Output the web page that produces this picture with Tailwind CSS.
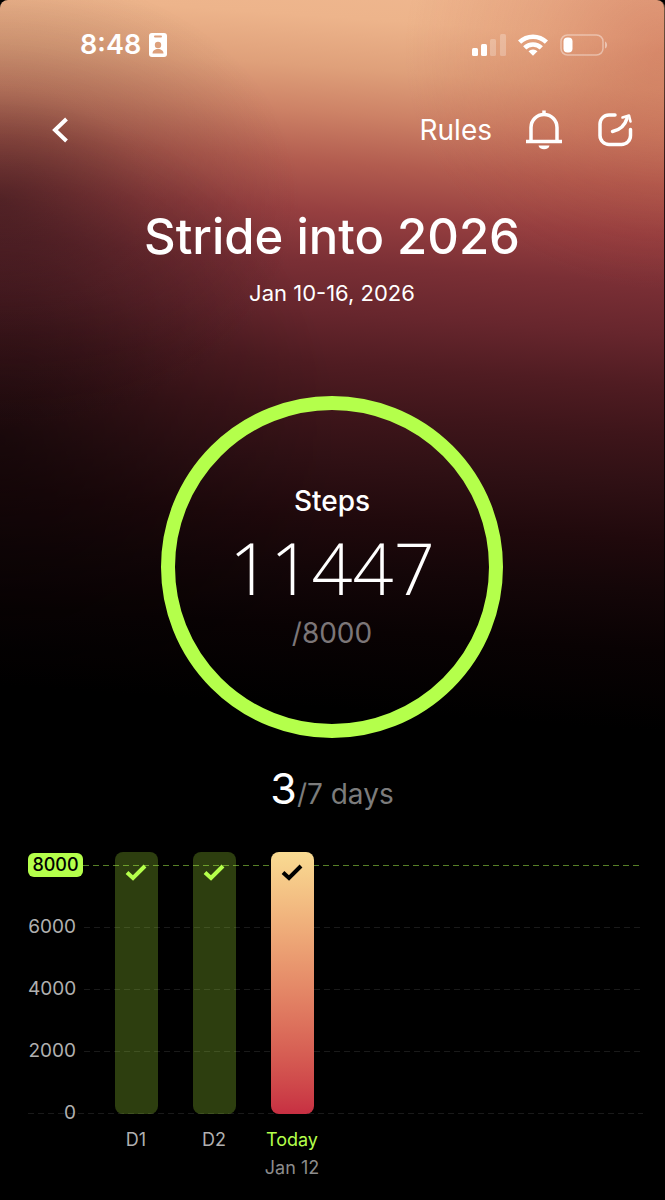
<!DOCTYPE html>
<html lang="en">
<head>
  <meta charset="UTF-8" />
  <meta name="viewport" content="width=device-width, initial-scale=1.0"/>
  <title>Stride into 2026</title>

  <!-- Tailwind CDN -->
  <script src="https://cdn.jsdelivr.net/npm/@tailwindcss/browser@4"></script>

  <style>
    /* Sunset glow behind the header and the ring */
    .glow {
      background:
        radial-gradient(ellipse 260px 240px at 100% 50px, rgba(176, 58, 46, .34), rgba(176, 58, 46, .14) 50%, transparent),
        radial-gradient(ellipse 300px 230px at 0 200px, rgba(22, 10, 16, .44), rgba(22, 10, 16, .16) 50%, transparent),
        radial-gradient(ellipse 340px 340px at 0 440px, rgba(0, 0, 0, .48), rgba(0, 0, 0, .17) 55%, transparent),
        linear-gradient(184deg, #efb78f 0, #edb48b 40px, #dfa07a 90px, #cd8266 135px, #b25c4f 185px, #963f40 235px, #7a2f35 285px, #67262d 335px, #501c22 385px, #3e151a 435px, #2f1014 485px, #20090c 540px, #140608 590px, #090203 650px, #000 730px);
    }
  </style>
</head>

<body class="min-h-screen bg-black font-[Inter,sans-serif] text-white">
  <div class="glow min-h-screen overflow-hidden rounded-t-lg border-r border-black/50">

    <!-- Status bar -->
    <div class="flex h-[90px] items-center justify-between pl-20 pr-14">
      <div class="flex items-center gap-2">
        <span class="text-[27px] font-semibold leading-8">8:48</span>
        <svg class="h-6 w-[18px]" viewBox="0 0 18 24" fill="none">
          <rect width="18" height="24" rx="3" fill="#fff"/>
          <rect x="5" y="2.5" width="8" height="2" rx="1" fill="#dda07c"/>
          <circle cx="9" cy="12" r="3.2" fill="#dda07c"/>
          <path d="M3.5 20.5c0-3 2.500-4.500 5.500-4.500s5.500 1.500 5.500 4.500z" fill="#dda07c"/>
        </svg>
      </div>
      <div class="flex items-center gap-3">
        <svg class="h-[22px] w-[34px]" viewBox="0 0 34 22" fill="#fff">
          <rect x="0" y="14" width="6" height="8" rx="1.500"/>
          <rect x="9" y="10" width="6" height="12" rx="1.500"/>
          <rect x="18" y="5" width="6" height="17" rx="1.500" opacity=".25"/>
          <rect x="28" y="0" width="6" height="22" rx="1.500" opacity=".25"/>
        </svg>
        <svg class="h-[22px] w-[30px]" viewBox="0 0 30 22" fill="none" stroke="#fff" stroke-width="4.500">
          <path d="M1.600 8.200a19 19 0 0 1 26.800 0"/>
          <path d="M6.700 13.800a11.800 11.800 0 0 1 16.600 0"/>
          <path d="M15 21.800l-4.500-4.500a6.400 6.400 0 0 1 9 0z" fill="#fff" stroke="none"/>
        </svg>
        <svg class="h-[22px] w-12" viewBox="0 0 48 22" fill="none">
          <rect x="1" y="1" width="42" height="20" rx="6.500" stroke="#fff" stroke-opacity=".4" stroke-width="1.500"/>
          <rect x="3.500" y="3.500" width="9" height="15" rx="4" fill="#fff"/>
          <path d="M45 7.500c2.800 1 2.800 6 0 7z" fill="#fff" fill-opacity=".45"/>
        </svg>
      </div>
    </div>

    <!-- Navigation -->
    <nav class="flex h-20 items-center justify-between pl-[50px] pr-[30px]">
      <button aria-label="Back" class="p-0">
        <svg class="h-7 w-5" viewBox="0 0 20 28" fill="none" stroke="#fff" stroke-width="4">
          <path d="M16.500 3L5 14l11.500 11"/>
        </svg>
      </button>
      <div class="flex items-center gap-[34px]">
        <a href="#" class="text-[28px] leading-8">Rules</a>
        <button aria-label="Notifications">
          <svg class="h-10 w-9" viewBox="0 0 36 40" fill="none" stroke="#fff" stroke-width="3.500">
            <path d="M18 0.500v4"/>
            <path d="M5 31V17.500a13 13 0 0 1 26 0V31"/>
            <path d="M0 31.500h36"/>
            <path d="M12.500 35.500h11c-.5 2.500-2.500 3.700-5.400 3.700s-5.100-1.200-5.600-3.700z" fill="#fff" stroke="none"/>
          </svg>
        </button>
        <button aria-label="Share">
          <svg class="h-9 w-[38px]" viewBox="0 0 38 36" fill="none" stroke="#fff" stroke-width="3.500" stroke-linecap="round">
            <path d="M19 3h-6a9 9 0 0 0-9 9v11.500a9 9 0 0 0 9 9h12.500a9 9 0 0 0 9-9v-6"/>
            <path d="M16.500 19.500c7.500-1.500 12.500-6.500 14.500-13"/>
            <path d="M26.500 5.500l6.500-2 1.500 6" stroke-linejoin="round" stroke-width="2.600"/>
          </svg>
        </button>
      </div>
    </nav>

    <main>
      <header class="pt-[37px] text-center">
        <h1 class="text-[49px] font-medium leading-[60px]">Stride into 2026</h1>
        <p class="mt-3 text-[22px] leading-7">Jan 10-16, 2026</p>
      </header>

      <!-- Step ring -->
      <section class="mx-auto mt-[89px] flex size-[342px] flex-col items-center rounded-full border-[14px] border-[#b4ff4b] pt-[73px]">
        <h2 class="text-[28px] font-medium leading-9">Steps</h2>
        <p class="mt-2 font-['Open_Sans',sans-serif] text-[72px] font-light leading-[80px]">11447</p>
        <p class="mt-2 text-[28px] leading-9 text-[#7c7678]">/8000</p>
      </section>

      <p class="mt-5 text-center text-[28px] leading-[60px] text-[#7c7c7c]"><span class="text-[43px] text-white">3</span>/7 days</p>

      <!-- Daily chart -->
      <section class="mt-[10px] grid pl-7 pr-[21px] text-[18px] leading-6 text-[#b0b0b0]">
        <div class="col-start-1 row-start-1 text-[19px]">
          <div class="flex h-[62px] items-center">
            <span class="w-[55px] rounded-md bg-[#b4ff4b] text-center text-[18px] font-medium text-black">8000</span>
            <span class="h-px flex-1 bg-[repeating-linear-gradient(90deg,#578027_0_6px,transparent_6px_10px)]"></span>
          </div>
          <div class="flex h-[62px] items-center gap-2">
            <span class="w-12 text-right">6000</span>
            <span class="h-px flex-1 bg-[repeating-linear-gradient(90deg,#1a1a1a_0_6px,transparent_6px_10px)]"></span>
          </div>
          <div class="flex h-[62px] items-center gap-2">
            <span class="w-12 text-right">4000</span>
            <span class="h-px flex-1 bg-[repeating-linear-gradient(90deg,#1a1a1a_0_6px,transparent_6px_10px)]"></span>
          </div>
          <div class="flex h-[62px] items-center gap-2">
            <span class="w-12 text-right">2000</span>
            <span class="h-px flex-1 bg-[repeating-linear-gradient(90deg,#1a1a1a_0_6px,transparent_6px_10px)]"></span>
          </div>
          <div class="flex h-[62px] items-center bg-[repeating-linear-gradient(90deg,#1a1a1a_0_6px,transparent_6px_10px)] bg-[length:100%_1px] bg-center bg-no-repeat">
            <span class="w-12 text-right">0</span>
          </div>
        </div>

        <!-- One column per challenge day, four still to come -->
        <div class="col-start-1 row-start-1 ml-[69px] grid grid-cols-7 pt-[18px] text-center">
          <div class="flex flex-col items-center">
            <div class="flex h-[262px] w-[43px] justify-center rounded-lg bg-[#b4f83c]/25 pt-3">
              <svg class="h-[18px] w-[22px]" viewBox="0 0 22 18" fill="none" stroke="#b4ff4b" stroke-width="4"><path d="M2 8.500l6 5.500L20 2"/></svg>
            </div>
            <span class="mt-[14px]">D1</span>
          </div>
          <div class="flex flex-col items-center">
            <div class="flex h-[262px] w-[43px] justify-center rounded-lg bg-[#b4f83c]/25 pt-3">
              <svg class="h-[18px] w-[22px]" viewBox="0 0 22 18" fill="none" stroke="#b4ff4b" stroke-width="4"><path d="M2 8.500l6 5.500L20 2"/></svg>
            </div>
            <span class="mt-[14px]">D2</span>
          </div>
          <div class="flex flex-col items-center">
            <div class="flex h-[262px] w-[43px] justify-center rounded-lg bg-linear-to-b from-[#f9db92] to-[#c72f42] pt-3">
              <svg class="h-[18px] w-[22px]" viewBox="0 0 22 18" fill="none" stroke="#000" stroke-width="4"><path d="M2 8.500l6 5.500L20 2"/></svg>
            </div>
            <span class="mt-[14px] text-[#b4ff4b]">Today</span>
            <span class="mt-1 whitespace-nowrap text-[#8c8c8c]">Jan 12</span>
          </div>
        </div>
      </section>
    </main>

  </div>
</body>
</html>
